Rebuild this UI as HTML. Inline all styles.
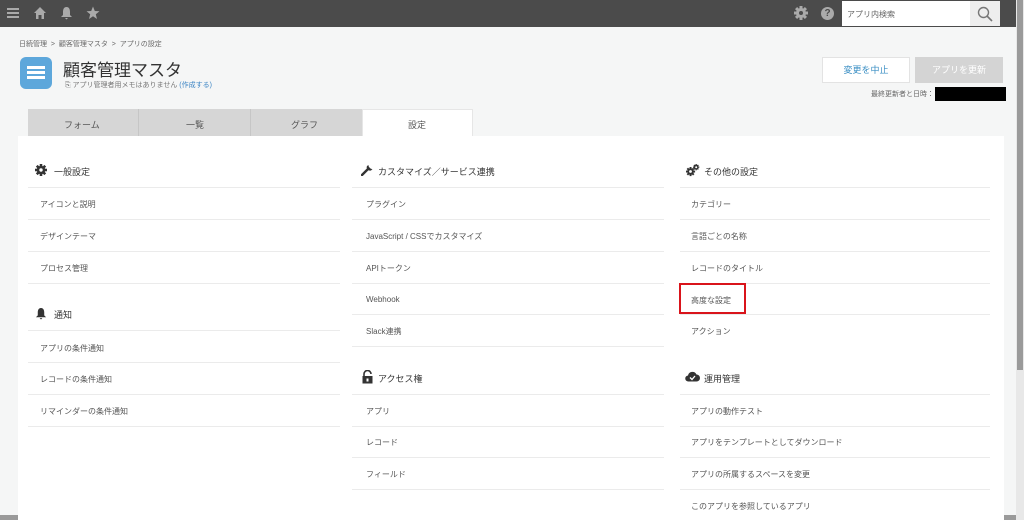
<!DOCTYPE html>
<html><head><meta charset="utf-8"><style>
*{margin:0;padding:0;box-sizing:border-box}
body{width:1024px;height:520px;overflow:hidden;background:#f5f6f6;font-family:"Liberation Sans","Noto Sans CJK JP",sans-serif;color:#333;position:relative}
.top{position:absolute;left:0;top:0;width:1016px;height:27px;background:#4b4b4b}
.abs{position:absolute}
.t{position:absolute;font-size:8px;color:#555;white-space:nowrap}
.h{position:absolute;font-size:9px;color:#333;white-space:nowrap}
.ln{position:absolute;height:1px;background:#ebebeb}
</style></head><body>
<svg width="0" height="0" style="position:absolute"><defs>
<g id="gear"><rect x="5.5" y="0" width="3" height="14"/><rect x="5.5" y="0" width="3" height="14" transform="rotate(45 7 7)"/><rect x="5.5" y="0" width="3" height="14" transform="rotate(90 7 7)"/><rect x="5.5" y="0" width="3" height="14" transform="rotate(135 7 7)"/><circle cx="7" cy="7" r="5"/></g>
</defs></svg>
<div class="top">
 <div class="abs" style="left:7px;top:8px;width:12px;height:2px;background:#aaa;box-shadow:0 4px #aaa,0 8px #aaa"></div>
 <svg class="abs" style="left:33px;top:6px" width="14" height="14" viewBox="0 0 14 14"><path d="M7 1 L13 7 H11 V13 H8.5 V9 H5.5 V13 H3 V7 H1 Z" fill="#aaa"/></svg>
 <svg class="abs" style="left:60px;top:6px" width="13" height="14" viewBox="0 0 13 14"><path d="M6.5 1 C9.5 1 10 4 10 6 V9 L12 11 H1 L3 9 V6 C3 4 3.5 1 6.5 1Z M5 12 H8 L6.5 13.5Z" fill="#aaa"/></svg>
 <svg class="abs" style="left:86px;top:6px" width="14" height="14" viewBox="0 0 14 14"><path d="M7 0.5 L8.8 5 L13.5 5.2 L9.8 8.2 L11 13 L7 10.3 L3 13 L4.2 8.2 L0.5 5.2 L5.2 5Z" fill="#aaa"/></svg>
 <svg class="abs" style="left:794px;top:6px" width="14" height="14" viewBox="0 0 14 14"><g fill="#aaa"><use href="#gear"/></g><circle cx="7" cy="7" r="2" fill="#4b4b4b"/></svg>
 <div class="abs" style="left:821px;top:7px;width:13px;height:13px;border-radius:50%;background:#aaa;color:#4b4b4b;font-size:10px;font-weight:bold;text-align:center;line-height:13px">?</div>
 <div class="abs" style="left:842px;top:1px;width:128px;height:25px;background:#fff"><span class="t" style="left:5px;top:8px;color:#666">アプリ内検索</span></div>
 <div class="abs" style="left:970px;top:1px;width:30px;height:25px;background:#eee"></div>
 <svg class="abs" style="left:977px;top:6px" width="16" height="16" viewBox="0 0 16 16"><circle cx="6.5" cy="6.5" r="5" fill="none" stroke="#777" stroke-width="1.4"/><path d="M10 10 L15 15" stroke="#777" stroke-width="1.6"/></svg>
</div>
<div class="abs" style="left:1016px;top:0;width:8px;height:520px;background:#e8e8e8"></div>
<div class="abs" style="left:1017px;top:0;width:6px;height:370px;background:#9a9a9a"></div>
<div class="abs" style="left:0;top:515px;width:1016px;height:5px;background:#9a9a9a"></div>

<div class="t" style="left:19px;top:39px;font-size:7px;color:#666">日続管理 &nbsp;&gt;&nbsp; 顧客管理マスタ &nbsp;&gt;&nbsp; アプリの設定</div>
<div class="abs" style="left:20px;top:57px;width:32px;height:32px;border-radius:6px;background:#5da7db"></div>
<div class="abs" style="left:27px;top:66px;width:18px;height:3px;background:#fff;box-shadow:0 5px #fff,0 10px #fff"></div>
<div class="t" style="left:63px;top:56px;font-size:17px;color:#333">顧客管理マスタ</div>
<div class="t" style="left:65px;top:80px;font-size:7px;color:#777">⎘ アプリ管理者用メモはありません <span style="color:#3b84c4">(作成する)</span></div>

<div class="abs" style="left:822px;top:57px;width:88px;height:26px;background:#fff;border:1px solid #e3e3e3;font-size:9px;color:#3b8fc4;text-align:center;line-height:24px">変更を中止</div>
<div class="abs" style="left:915px;top:57px;width:88px;height:26px;background:#d4d4d4;font-size:9px;color:#fff;text-align:center;line-height:26px">アプリを更新</div>
<div class="t" style="left:871px;top:89px;font-size:7px;color:#666">最終更新者と日時：</div>
<div class="abs" style="left:935px;top:87px;width:71px;height:14px;background:#000"></div>

<div class="abs" style="left:28px;top:109px;width:334px;height:27px;background:#d6d6d6"></div>
<div class="abs" style="left:138px;top:109px;width:1px;height:27px;background:#c6c6c6"></div>
<div class="abs" style="left:250px;top:109px;width:1px;height:27px;background:#c6c6c6"></div>
<div class="abs" style="left:362px;top:109px;width:111px;height:28px;background:#fff;border:1px solid #e6e6e6;border-bottom:none"></div>
<div class="t" style="left:64px;top:118px;font-size:9px">フォーム</div>
<div class="t" style="left:186px;top:118px;font-size:9px">一覧</div>
<div class="t" style="left:291px;top:118px;font-size:9px">グラフ</div>
<div class="t" style="left:408px;top:118px;font-size:9px">設定</div>
<div class="abs" style="left:18px;top:136px;width:986px;height:384px;background:#fff"></div>

<!-- col1 -->
<svg class="abs" style="left:35px;top:164px" width="12" height="12" viewBox="0 0 14 14"><g fill="#333"><use href="#gear"/></g><circle cx="7" cy="7" r="2" fill="#fff"/></svg>
<div class="h" style="left:54px;top:165px">一般設定</div>
<div class="ln" style="left:28px;top:187px;width:312px"></div>
<div class="t" style="left:40px;top:199px">アイコンと説明</div>
<div class="ln" style="left:28px;top:219px;width:312px"></div>
<div class="t" style="left:40px;top:231px">デザインテーマ</div>
<div class="ln" style="left:28px;top:251px;width:312px"></div>
<div class="t" style="left:40px;top:263px">プロセス管理</div>
<div class="ln" style="left:28px;top:283px;width:312px"></div>
<svg class="abs" style="left:35px;top:307px" width="12" height="13" viewBox="0 0 13 14"><path d="M6.5 1 C9.5 1 10 4 10 6 V9 L12 11 H1 L3 9 V6 C3 4 3.5 1 6.5 1Z M5 12 H8 L6.5 13.5Z" fill="#333"/></svg>
<div class="h" style="left:54px;top:308px">通知</div>
<div class="ln" style="left:28px;top:330px;width:312px"></div>
<div class="t" style="left:40px;top:343px">アプリの条件通知</div>
<div class="ln" style="left:28px;top:362px;width:312px"></div>
<div class="t" style="left:40px;top:374px">レコードの条件通知</div>
<div class="ln" style="left:28px;top:394px;width:312px"></div>
<div class="t" style="left:40px;top:406px">リマインダーの条件通知</div>
<div class="ln" style="left:28px;top:426px;width:312px"></div>

<!-- col2 -->
<svg class="abs" style="left:361px;top:164px" width="12" height="12" viewBox="0 0 12 12"><path d="M1 11 L6.5 5.5" stroke="#333" stroke-width="2.4" stroke-linecap="round"/><path d="M6 2 A3.3 3.3 0 0 0 10 6.5 L11.5 5 A3 3 0 0 1 9.5 4.5 L8 3 A3 3 0 0 1 7.5 1Z" fill="#333"/></svg>
<div class="h" style="left:378px;top:165px">カスタマイズ／サービス連携</div>
<div class="ln" style="left:352px;top:187px;width:312px"></div>
<div class="t" style="left:366px;top:199px">プラグイン</div>
<div class="ln" style="left:352px;top:219px;width:312px"></div>
<div class="t" style="left:366px;top:231px">JavaScript / CSSでカスタマイズ</div>
<div class="ln" style="left:352px;top:251px;width:312px"></div>
<div class="t" style="left:366px;top:263px">APIトークン</div>
<div class="ln" style="left:352px;top:283px;width:312px"></div>
<div class="t" style="left:366px;top:295px">Webhook</div>
<div class="ln" style="left:352px;top:314px;width:312px"></div>
<div class="t" style="left:366px;top:326px">Slack連携</div>
<div class="ln" style="left:352px;top:346px;width:312px"></div>
<svg class="abs" style="left:362px;top:370px" width="11" height="14" viewBox="0 0 11 14"><path d="M2 6 V4 A3.5 3.5 0 0 1 9 4" stroke="#333" stroke-width="1.6" fill="none"/><rect x="0.5" y="6" width="10" height="7.5" fill="#333"/><rect x="4.5" y="8.5" width="2" height="3" fill="#fff"/></svg>
<div class="h" style="left:378px;top:372px">アクセス権</div>
<div class="ln" style="left:352px;top:394px;width:312px"></div>
<div class="t" style="left:366px;top:406px">アプリ</div>
<div class="ln" style="left:352px;top:426px;width:312px"></div>
<div class="t" style="left:366px;top:437px">レコード</div>
<div class="ln" style="left:352px;top:457px;width:312px"></div>
<div class="t" style="left:366px;top:469px">フィールド</div>
<div class="ln" style="left:352px;top:489px;width:312px"></div>

<!-- col3 -->
<svg class="abs" style="left:686px;top:163px" width="14" height="14" viewBox="0 0 14 14"><g fill="#333" transform="translate(0 4) scale(0.65)"><use href="#gear"/></g><circle cx="4.5" cy="8.5" r="1.4" fill="#fff"/><g fill="#333" transform="translate(7 1) scale(0.45)"><use href="#gear"/></g><circle cx="10.2" cy="4.2" r="1" fill="#fff"/></svg>
<div class="h" style="left:704px;top:165px">その他の設定</div>
<div class="ln" style="left:680px;top:187px;width:310px"></div>
<div class="t" style="left:691px;top:199px">カテゴリー</div>
<div class="ln" style="left:680px;top:219px;width:310px"></div>
<div class="t" style="left:691px;top:231px">言語ごとの名称</div>
<div class="ln" style="left:680px;top:251px;width:310px"></div>
<div class="t" style="left:691px;top:263px">レコードのタイトル</div>
<div class="ln" style="left:680px;top:283px;width:310px"></div>
<div class="abs" style="left:679px;top:283px;width:67px;height:31px;border:2px solid #d9141b"></div>
<div class="t" style="left:691px;top:295px">高度な設定</div>
<div class="ln" style="left:680px;top:314px;width:310px"></div>
<div class="t" style="left:691px;top:326px">アクション</div>
<svg class="abs" style="left:685px;top:370px" width="15" height="12" viewBox="0 0 15 12"><path d="M3.5 11.5 A3 3 0 0 1 3 5.5 A4.5 4.5 0 0 1 11.5 4.5 A3.5 3.5 0 0 1 11.5 11.5Z" fill="#333"/><path d="M5 7.5 L7 9.5 L10 6" stroke="#fff" stroke-width="1.3" fill="none"/></svg>
<div class="h" style="left:704px;top:372px">運用管理</div>
<div class="ln" style="left:680px;top:394px;width:310px"></div>
<div class="t" style="left:691px;top:406px">アプリの動作テスト</div>
<div class="ln" style="left:680px;top:426px;width:310px"></div>
<div class="t" style="left:691px;top:437px">アプリをテンプレートとしてダウンロード</div>
<div class="ln" style="left:680px;top:457px;width:310px"></div>
<div class="t" style="left:691px;top:469px">アプリの所属するスペースを変更</div>
<div class="ln" style="left:680px;top:489px;width:310px"></div>
<div class="t" style="left:691px;top:501px">このアプリを参照しているアプリ</div>
</body></html>
